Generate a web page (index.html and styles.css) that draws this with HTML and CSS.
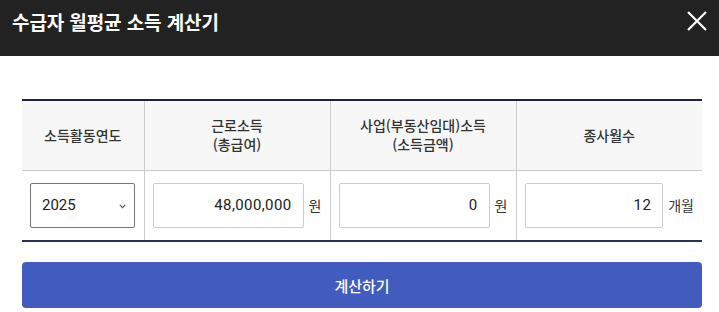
FILE: index.html
```html
<!DOCTYPE html>
<html lang="ko">
<head>
<meta charset="utf-8">
<link rel="stylesheet" href="styles.css">
</head>
<body>
<div class="modal">
  <header class="modal-head">
    <h1 class="modal-title">수급자 월평균 소득 계산기</h1>
    <button class="close-btn" aria-label="닫기">
      <svg width="20" height="20" viewBox="0 0 20 20"><path d="M1 1L19 19M19 1L1 19" stroke="#fff" stroke-width="2.2" fill="none"/></svg>
    </button>
  </header>
  <div class="modal-body">
    <table class="calc-table">
      <colgroup>
        <col class="c1"><col class="c2"><col class="c3"><col class="c4">
      </colgroup>
      <thead>
        <tr>
          <th>소득활동연도</th>
          <th>근로소득<br>(총급여)</th>
          <th>사업(부동산임대)소득<br>(소득금액)</th>
          <th>종사월수</th>
        </tr>
      </thead>
      <tbody>
        <tr>
          <td>
            <div class="select-box"><span>2025</span>
              <svg class="chev" width="7" height="5" viewBox="0 0 7 5"><path d="M0.8 0.8L3.5 3.6L6.2 0.8" stroke="#555" stroke-width="1.2" fill="none"/></svg>
            </div>
          </td>
          <td><div class="field"><div class="input">48,000,000</div><span class="unit">원</span></div></td>
          <td><div class="field"><div class="input">0</div><span class="unit">원</span></div></td>
          <td><div class="field"><div class="input">12</div><span class="unit">개월</span></div></td>
        </tr>
      </tbody>
    </table>
    <button class="calc-btn">계산하기</button>
  </div>
</div>
</body>
</html>
```
FILE: styles.css
```css
* { box-sizing: border-box; }
html, body { margin: 0; padding: 0; background: #fff; }
body { font-family: "Noto Sans CJK KR", "Noto Sans", sans-serif; color: #333; overflow: hidden; }
.modal-head {
  height: 56px;
  background: #222;
  display: flex;
  align-items: center;
  justify-content: space-between;
  padding: 0 12px 0 12px;
}
.modal-title {
  margin: 0;
  color: #fff;
  font-size: 19px;
  font-weight: 700;
  letter-spacing: -0.1px;
  margin-top: -14px;
}
.close-btn {
  background: none;
  border: 0;
  padding: 0;
  width: 20px;
  height: 20px;
  margin-top: -14px;
  margin-right: 0;
  display: flex;
}
.modal-body { padding: 43px 17px 0 22px; }
.calc-table {
  width: 680px;
  border-collapse: collapse;
  table-layout: fixed;
  border-top: 2px solid #1d2440;
  border-bottom: 2px solid #2a3355;
}
.c1 { width: 122px; }
.c2, .c3, .c4 { width: 186px; }
.calc-table th {
  background: #f7f7f7;
  height: 70px;
  font-size: 14px;
  font-weight: 500;
  line-height: 19px;
  color: #333;
  border-left: 1px solid #ccc;
  border-bottom: 1px solid #ccc;
  padding: 0;
}
.calc-table td {
  height: 71px;
  padding: 0 8px 0 8px;
  border-left: 1px solid #ccc;
}
.calc-table td:first-child { padding-right: 9px; }
.calc-table th:first-child, .calc-table td:first-child { border-left: 0; }
.select-box {
  height: 45px;
  border: 1px solid #767676;
  border-radius: 2px;
  display: flex;
  align-items: center;
  justify-content: space-between;
  padding: 0 8px 0 11px;
  font-size: 15px;
  color: #222;
  font-family: "Roboto", "Noto Sans CJK KR", sans-serif;
}
.chev { margin-top: 2px; }
.field { display: flex; align-items: center; }
.input {
  flex: 1;
  height: 45px;
  border: 1px solid #ccc;
  border-radius: 2px;
  display: flex;
  align-items: center;
  justify-content: flex-end;
  padding-right: 11px;
  font-size: 15px;
  color: #222;
  font-family: "Roboto", "Noto Sans CJK KR", sans-serif;
  letter-spacing: 0.4px;
}
.unit { margin-left: 5px; font-size: 14px; color: #333; }
.calc-btn {
  display: block;
  width: 680px;
  height: 46px;
  margin-top: 20px;
  background: #425bbf;
  border: 0;
  border-radius: 4px;
  color: #fff;
  font-family: "Noto Sans CJK KR", sans-serif;
  font-size: 15px;
  font-weight: 500;
}
```
